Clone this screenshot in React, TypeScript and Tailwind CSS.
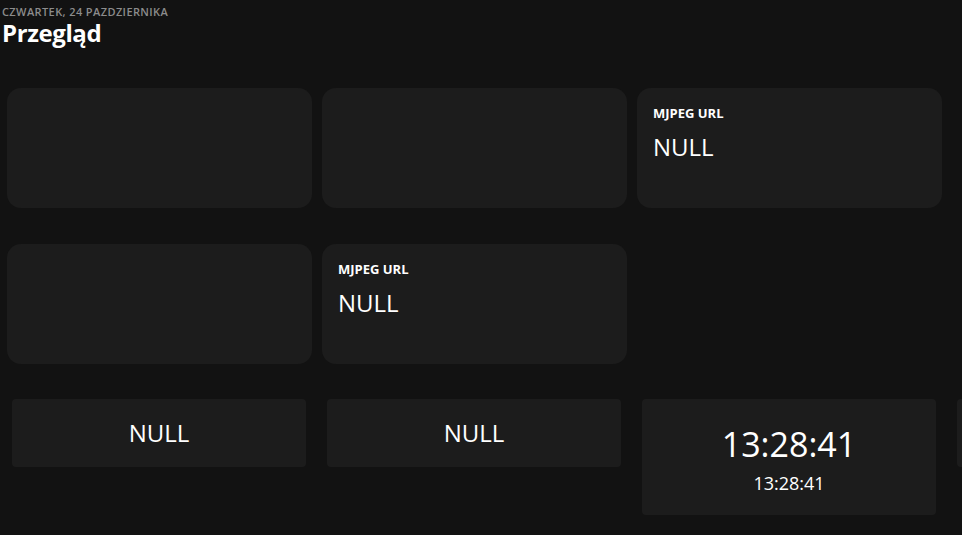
import React from "react";

const font = { fontFamily: '"Open Sans", "Noto Sans", sans-serif' };

function ValueCard({ label, value }: { label?: string; value?: string }) {
  return (
    <div className="h-[120px] rounded-[14px] bg-[#1c1c1c] px-4 pt-[16px]">
      {label && (
        <>
          <div className="text-[13px] font-bold leading-[18px] text-white">{label}</div>
          <div className="mt-[10px] text-[24px] leading-[30px] text-white">{value}</div>
        </>
      )}
    </div>
  );
}

function Tile({ children, tall }: { children?: React.ReactNode; tall?: boolean }) {
  return (
    <div
      className={`w-[294px] shrink-0 rounded-[4px] bg-[#1c1c1c] flex flex-col items-center justify-center text-white ${
        tall ? "h-[116px]" : "h-[68px]"
      }`}
    >
      {children}
    </div>
  );
}

export default function App() {
  return (
    <div className="h-[535px] w-[962px] overflow-hidden bg-[#121212]" style={font}>
      {/* Header */}
      <div className="px-[2px] pt-[5px]">
        <div className="text-[11px] leading-[14px] font-semibold tracking-[0.4px] text-[#8c8c8c] uppercase">
          Czwartek, 24 pazdziernika
        </div>
        <h1 className="text-[24px] font-bold leading-[27px] tracking-[-0.4px] text-white">Przegląd</h1>
      </div>

      {/* Cards */}
      <div className="mt-[42px] grid grid-cols-[305px_305px_305px] gap-x-[10px] gap-y-[36px] px-[7px]">
        <ValueCard />
        <ValueCard />
        <ValueCard label="MJPEG URL" value="NULL" />
        <ValueCard />
        <ValueCard label="MJPEG URL" value="NULL" />
      </div>

      {/* Bottom row */}
      <div className="mt-[35px] flex items-start gap-[21px] pl-[12px]">
        <Tile>
          <span className="text-[24px] leading-[30px]">NULL</span>
        </Tile>
        <Tile>
          <span className="text-[24px] leading-[30px]">NULL</span>
        </Tile>
        <Tile tall>
          <span className="text-[34px] leading-[42px] mt-[4px]">13:28:41</span>
          <span className="text-[18px] leading-[24px] mt-[6px]">13:28:41</span>
        </Tile>
        <Tile />
      </div>
    </div>
  );
}
